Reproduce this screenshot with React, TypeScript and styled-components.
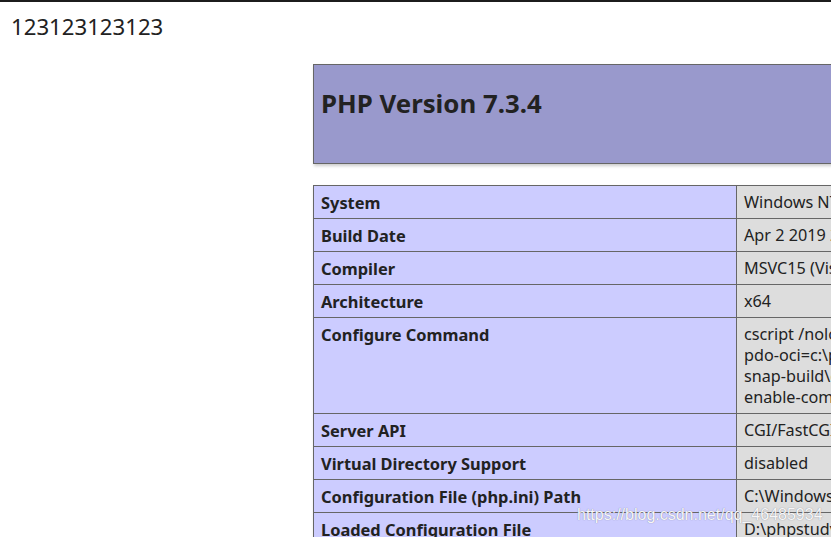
import React from "react";
import styled, { createGlobalStyle } from "styled-components";

const GlobalStyle = createGlobalStyle`
  html, body {
    margin: 0;
    padding: 0;
    background: #ffffff;
    overflow: hidden;
  }
  body {
    color: #222222;
    font-family: "Noto Sans", "Open Sans", sans-serif;
  }
`;

const Page = styled.div`
  position: relative;
  width: 831px;
  height: 537px;
  overflow: hidden;
`;

const TopRule = styled.div`
  height: 2px;
  background: #1c1c1c;
`;

const Intro = styled.div`
  padding: 8px 0 0 11px;
  height: 54px;
  box-sizing: border-box;
  font-size: 22.2px;
  line-height: 34px;
  color: #222222;
`;

const Center = styled.div`
  padding-left: 313px;
  padding-top: 8px;
`;

const InfoTable = styled.table<{ $gap?: number }>`
  border-collapse: collapse;
  border: 0;
  width: 1270px;
  box-shadow: 1px 2px 3px #cccccc;
  margin-bottom: ${(p) => p.$gap ?? 0}px;
  text-align: left;
`;

const HeaderCell = styled.td`
  background: #9999cc;
  border: 1px solid #666666;
  height: 99px;
  box-sizing: border-box;
  padding: 0 7px;
  vertical-align: top;
`;

const Title = styled.h1`
  margin: 21px 0 0;
  font-size: 25.8px;
  line-height: 34px;
  font-weight: 700;
  color: #222222;
`;

const KeyCell = styled.td`
  background: #ccccff;
  border: 1px solid #666666;
  width: 408px;
  padding: 6px 7px 5px;
  font-size: 16.4px;
  line-height: 21px;
  font-weight: 700;
  vertical-align: top;
  color: #222222;
  white-space: nowrap;
`;

const ValueCell = styled.td`
  background: #dddddd;
  border: 1px solid #666666;
  padding: 6px 7px 5px;
  font-size: 16.2px;
  line-height: 21px;
  vertical-align: top;
  color: #222222;
  white-space: nowrap;
`;

const Line = styled.div`
  white-space: nowrap;
`;

const Watermark = styled.div`
  position: absolute;
  left: 577px;
  top: 505px;
  font-family: "Liberation Sans", Arial, sans-serif;
  font-size: 16px;
  line-height: 20px;
  color: rgba(255, 255, 255, 0.95);
  text-shadow: 0 0 1px rgba(90, 90, 110, 0.75);
  pointer-events: none;
  white-space: nowrap;
`;

type Row = { key: string; value: string[] };

const rows: Row[] = [
  { key: "System", value: ["Windows NT DESKTOP-PC 10.0 build 18362 (Windows 10) AMD64"] },
  { key: "Build Date", value: ["Apr 2 2019 21:57:22"] },
  { key: "Compiler", value: ["MSVC15 (Visual C++ 2017)"] },
  { key: "Architecture", value: ["x64"] },
  {
    key: "Configure Command",
    value: [
      'cscript /nologo configure.js "--enable-snapshot-build" "--enable-debug-pack" "--with-',
      'pdo-oci=c:\\php-snap-build\\deps_aux\\oracle\\x64\\instantclient_12_1\\sdk,shared" "--with-oci8-12c=c:\\php-',
      'snap-build\\deps_aux\\oracle\\x64\\instantclient_12_1\\sdk,shared" "--enable-object-out-dir=../obj/" "--',
      'enable-com-dotnet=shared" "--without-analyzer" "--with-pgo"',
    ],
  },
  { key: "Server API", value: ["CGI/FastCGI"] },
  { key: "Virtual Directory Support", value: ["disabled"] },
  { key: "Configuration File (php.ini) Path", value: ["C:\\Windows"] },
  { key: "Loaded Configuration File", value: ["D:\\phpstudy_pro\\Extensions\\php\\php7.3.4nts\\php.ini"] },
  { key: "Scan this dir for additional .ini files", value: ["(none)"] },
];

export default function App() {
  return (
    <Page>
      <GlobalStyle />
      <TopRule />
      <Intro>123123123123</Intro>
      <Center>
        <InfoTable $gap={21}>
          <tbody>
            <tr>
              <HeaderCell>
                <Title>PHP Version 7.3.4</Title>
              </HeaderCell>
            </tr>
          </tbody>
        </InfoTable>
        <InfoTable>
          <tbody>
            {rows.map((r) => (
              <tr key={r.key}>
                <KeyCell>{r.key}</KeyCell>
                <ValueCell>
                  {r.value.map((l, i) => (
                    <Line key={i}>{l}</Line>
                  ))}
                </ValueCell>
              </tr>
            ))}
          </tbody>
        </InfoTable>
      </Center>
      <Watermark>https://blog.csdn.net/qq_46485934</Watermark>
    </Page>
  );
}
